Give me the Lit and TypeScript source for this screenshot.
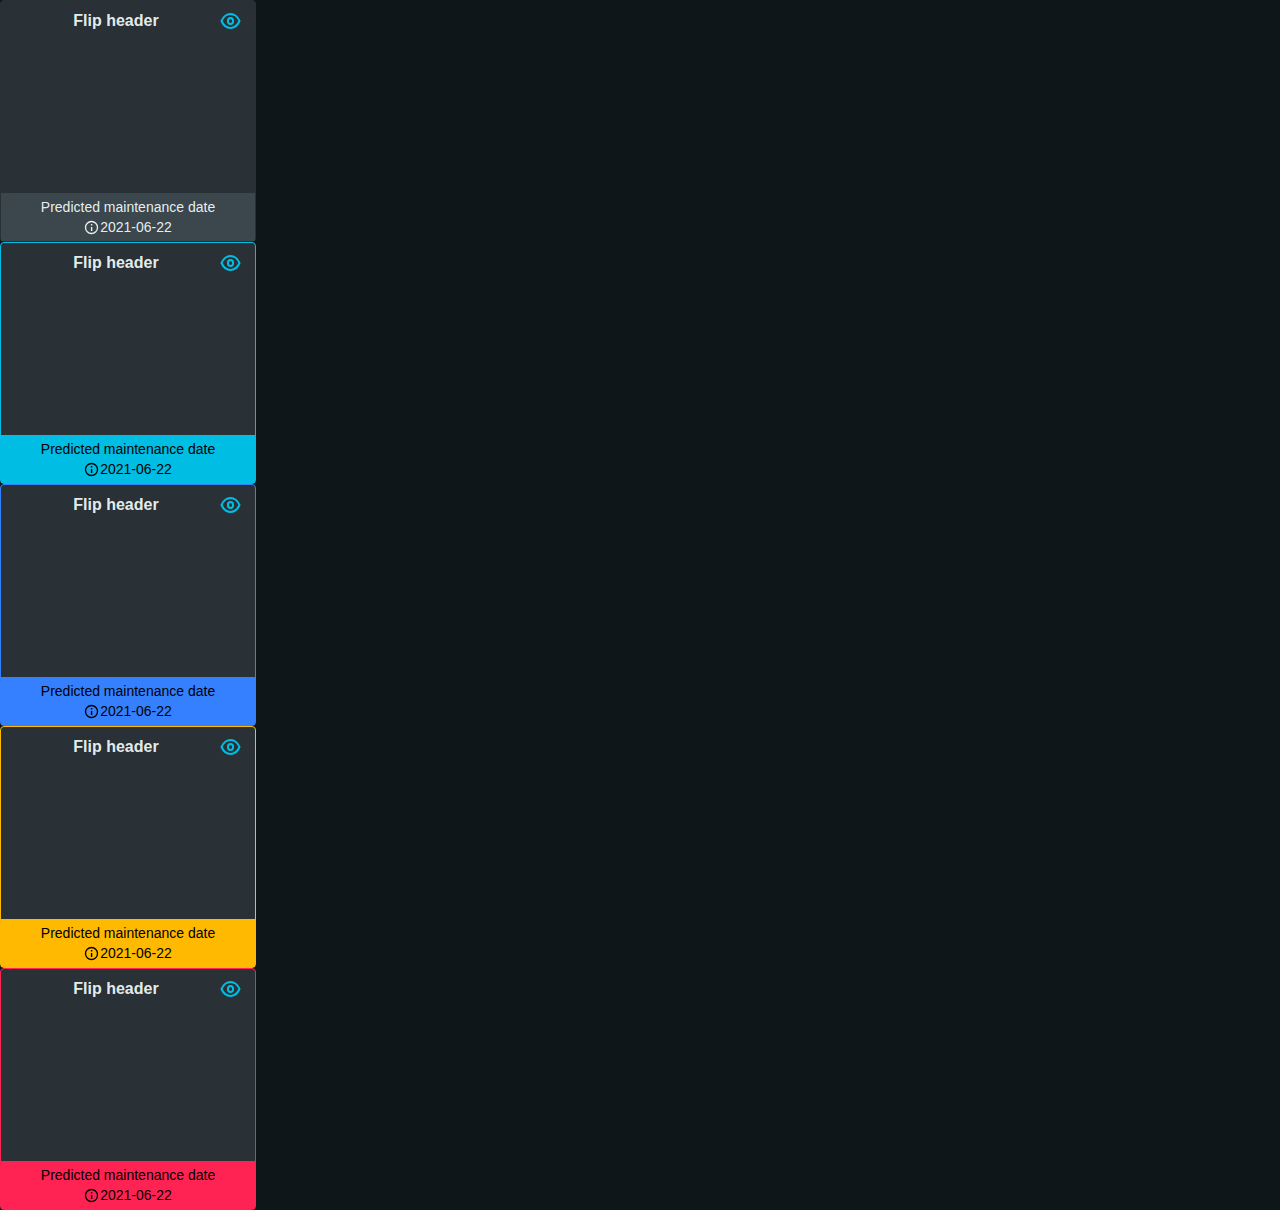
import { LitElement, html, css } from "lit";
import { customElement, property } from "lit/decorators.js";

@customElement("flip-tile")
class FlipTile extends LitElement {
  @property({ reflect: true }) variant = "";
  static styles = css`
    :host { display: block; --accent: #283236; --foot: #3c474d; --ink: rgba(245, 255, 255, 0.93); }
    :host([variant="primary"]) { --accent: #00bde3; --foot: #00bde3; --ink: #000; }
    :host([variant="info"]) { --accent: #3580ff; --foot: #3580ff; --ink: #000; }
    :host([variant="warning"]) { --accent: #ffb900; --foot: #ffb900; --ink: #000; }
    :host([variant="alarm"]) { --accent: #ff2353; --foot: #ff2353; --ink: #000; }
    .tile { box-sizing: border-box; width: 256px; height: 242px; display: flex; flex-direction: column;
      border: 1px solid var(--accent); border-radius: 4px; background: #293136; }
    .header { display: flex; align-items: center; height: 40px; padding: 0 8px 0 16px; }
    .title { flex: 1; text-align: center; font: bold 16px/24px "Liberation Sans", Arial, sans-serif; color: rgba(245, 255, 255, 0.93); }
    .toggle { width: 32px; height: 32px; display: grid; place-items: center; color: #00bde3; }
    .body { flex: 1; }
    .footer { height: 48px; box-sizing: border-box; padding: 4px 0; background: var(--foot); color: var(--ink);
      text-align: center; font: 14px/20px "Liberation Sans", Arial, sans-serif; }
    .date { display: flex; justify-content: center; align-items: center; }
    svg { display: block; }
  `;
  render() {
    return html`
      <div class="tile">
        <div class="header">
          <div class="title">Flip header</div>
          <div class="toggle">
            <svg width="24" height="24" viewBox="0 0 24 24" fill="none" stroke="currentColor" stroke-width="2">
              <path d="M2.500 12C4.500 7.500 7.500 5 11.500 5s7 2.500 9 7c-2 4.500-5 7-9 7s-7-2.500-9-7z" stroke-linejoin="round" />
              <ellipse cx="11.500" cy="12" rx="2.600" ry="3" />
            </svg>
          </div>
        </div>
        <div class="body"></div>
        <div class="footer">
          <div>Predicted maintenance date</div>
          <div class="date">
            <svg width="16" height="16" viewBox="0 0 16 16" fill="none" stroke="currentColor">
              <circle cx="7.500" cy="8.500" r="6" stroke-width="1.300" />
              <path d="M7.600 7.900v4M7.600 5.100v1.400" stroke-width="1.400" />
            </svg>
            <span>2021-06-22</span>
          </div>
        </div>
      </div>
    `;
  }
}

@customElement("app-root")
class AppRoot extends LitElement {
  static styles = css`
    :host { display: block; min-height: 100vh; background: #0f1619; }
  `;
  render() {
    return ["", "primary", "info", "warning", "alarm"].map((v) => html`<flip-tile variant=${v}></flip-tile>`);
  }
}
